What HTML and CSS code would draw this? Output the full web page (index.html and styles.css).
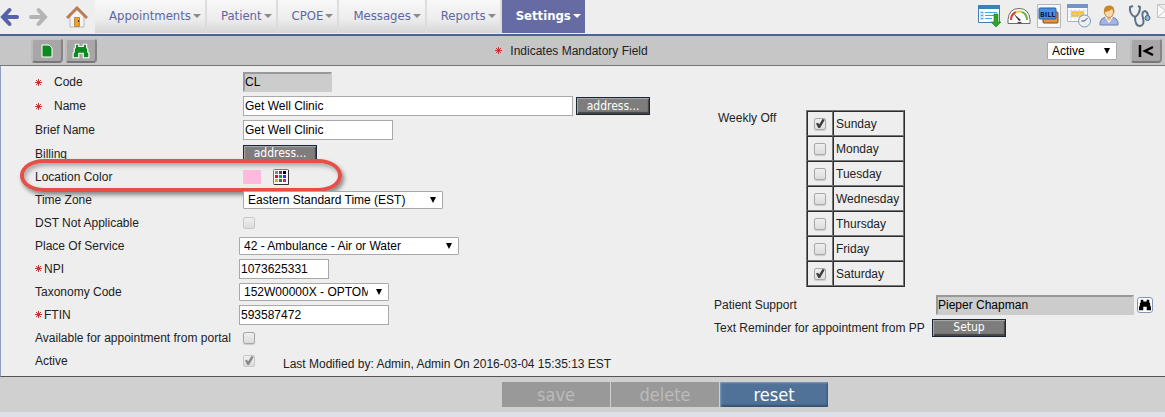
FILE: index.html
```html
<!DOCTYPE html>
<html lang="en">
<head>
    <meta charset="UTF-8">
    <title>Location Settings</title>
    <link rel="stylesheet" href="styles.css">
</head>
<body>

<svg class="defs" aria-hidden="true">
    <symbol id="star" viewBox="0 0 7 7">
        <path d="M0 3.5h7M3.5 0v7M1 1l5 5M6 1L1 6" stroke="#c0392f" stroke-width="1" fill="none"/>
    </symbol>
    <symbol id="binoculars" viewBox="0 0 16 14">
        <path d="M3 1h3v2h4V1h3v3l1 1v3l1 1v4h-5V9H6v4H1V9l1-1V5l1-1z"/>
    </symbol>
</svg>

<header class="topbar">
    <div class="history">
        <button class="plain" aria-label="Back">
            <svg width="19" height="20" viewBox="0 0 19 20"><path d="M17 10H4M9.500 3L3 10l6.500 7" fill="none" stroke="#5563a8" stroke-width="4" stroke-linecap="round"/></svg>
        </button>
        <button class="plain" aria-label="Forward">
            <svg width="19" height="20" viewBox="0 0 19 20"><path d="M2 10h13M9.500 3L16 10l-6.500 7" fill="none" stroke="#b4b4b4" stroke-width="4" stroke-linecap="round"/></svg>
        </button>
        <a href="#" class="home" aria-label="Home">
            <svg width="22" height="22" viewBox="0 0 22 22">
                <path d="M4 10l7-7 7 7v11H4z" fill="#f4f4f6" stroke="#b5b7bd"/>
                <path d="M8.500 11.500h5v9h-5z" fill="#f0a21c" stroke="#b98a4a"/>
                <path d="M12 14h1v2h-1z" fill="#333"/>
                <path d="M1 12L11 2l10 10" fill="none" stroke="#b97c55" stroke-width="3"/>
            </svg>
        </a>
    </div>
    <nav class="tabs">
        <a href="#" class="tab">Appointments<span class="caret"></span></a>
        <a href="#" class="tab">Patient<span class="caret"></span></a>
        <a href="#" class="tab">CPOE<span class="caret"></span></a>
        <a href="#" class="tab">Messages<span class="caret"></span></a>
        <a href="#" class="tab">Reports<span class="caret"></span></a>
        <a href="#" class="tab active">Settings<span class="caret"></span></a>
    </nav>
    <div class="shortcuts">
        <a href="#" aria-label="Task list">
            <svg width="24" height="24" viewBox="0 0 24 24">
                <path d="M1.500 1.500h21v17h-21z" fill="#fff" stroke="#477aa8"/>
                <path d="M1 1h22v4H1z" fill="#3f7fb5"/>
                <path d="M3 7h4v9H3z" fill="#cfe6f5"/>
                <path d="M4 8.500h2M4 11.500h2M4 14.500h2M8 8.500h12M8 11.500h9M8 14.500h7" stroke="#4aa3d8" fill="none"/>
                <path d="M17 10h4v8h3l-5 5-5-5h3z" fill="#2ba52b" stroke="#168016" stroke-width=".6"/>
            </svg>
        </a>
        <a href="#" aria-label="Dashboard">
            <svg width="24" height="24" viewBox="0 0 24 24">
                <path d="M1 19.500v-4q1-11 11-11t11 11v4z" fill="#fff" stroke="#6b6b6b"/>
                <path d="M4 16q0-6 5-8" fill="none" stroke="#d5432f" stroke-width="2"/>
                <path d="M9 8q3-1 6 0" fill="none" stroke="#e3ce3e" stroke-width="2"/>
                <path d="M15 8q5 2 5 8" fill="none" stroke="#67b34b" stroke-width="2"/>
                <path d="M6 9l6 8 2-1z" fill="#333"/>
                <path d="M10 19a3 3 0 0 1 5 0z" fill="#444"/>
            </svg>
        </a>
        <a href="#" aria-label="Billing">
            <svg width="24" height="24" viewBox="0 0 24 24">
                <path d="M.5.500h23v23H.5z" fill="#f8f8f8" stroke="#b4b4bc"/>
                <rect x="6" y="8" width="15" height="11" rx="1" fill="#e8943a" stroke="#7a4a1e"/>
                <rect x="2" y="4" width="17" height="11" rx="1" fill="#4a90e2" stroke="#2a5ca8"/>
                <text x="3" y="13" class="bill">BILL</text>
            </svg>
        </a>
        <a href="#" aria-label="Calendar">
            <svg width="24" height="24" viewBox="0 0 24 24">
                <path d="M.5.500h20v17H.5z" fill="#fff" stroke="#a9b6ca"/>
                <path d="M0 0h21v4H0z" fill="#6f95cc"/>
                <path d="M4 7h13v6H4z" fill="#fbbd2c"/>
                <path d="M1 7h19M1 10h19M1 13h19M4 5v12M8 5v12M12.500 5v12M17 5v12" stroke="#ccd6e6" fill="none" stroke-width=".7"/>
                <circle cx="17.500" cy="17" r="6" fill="#e9f0f6" stroke="#8595a8"/>
                <path d="M17.500 17l3-3M17.500 17h-3" stroke="#444" fill="none"/>
            </svg>
        </a>
        <a href="#" aria-label="User">
            <svg width="24" height="24" viewBox="0 0 24 24">
                <path d="M3 21v-3q1-4 6-5h6q5 1 6 5v3z" fill="#a3b4e0" stroke="#6f80b3"/>
                <path d="M8 13l4 6 4-6z" fill="#fff"/>
                <path d="M10 12h4v3l-2 2-2-2z" fill="#eab878"/>
                <ellipse cx="12" cy="8" rx="4.500" ry="5.500" fill="#f9d9a8" stroke="#c08a3e"/>
                <path d="M7 9Q6 1.500 12 1.500q6-.5 5.500 8Q17 7 15 5q-3 3-7 3z" fill="#c9862b"/>
            </svg>
        </a>
        <a href="#" aria-label="Clinical">
            <svg width="24" height="24" viewBox="0 0 24 24" fill="none">
                <path d="M6 2L3 3q-1 7 5 10 5-3 5-10l-2-1" stroke="#5d7184" stroke-width="2"/>
                <path d="M8 13q0 9 5 9 5-1 3-8-2-6 2-7 3 1 3 6" stroke="#5d7184" stroke-width="2"/>
                <circle cx="20.500" cy="14" r="2.500" fill="#8fb6dd" stroke="#45617c"/>
            </svg>
        </a>
        <a href="#" aria-label="Mail">
            <svg width="24" height="24" viewBox="0 0 24 24"><path d="M.5.500h23v13H.5zM1 1l11 8 11-8M1 13l8-7" fill="#fafafa" stroke="#c4c4c4"/></svg>
        </a>
    </div>
</header>

<div class="toolbar">
    <div class="tools">
        <button class="tool" aria-label="New">
            <svg width="12" height="14" viewBox="0 0 12 14"><path d="M1 1h7l3 3v9H1z" fill="#0b8a1f" stroke="#fff"/></svg>
        </button>
        <button class="tool" aria-label="Search">
            <svg width="18" height="16" viewBox="0 0 16 14" fill="#0b8a1f" stroke="#fff"><use href="#binoculars"/></svg>
        </button>
    </div>
    <div class="mandatory"><svg class="star"><use href="#star"/></svg>Indicates Mandatory Field</div>
    <div class="filter">
        <select class="status" aria-label="Status">
            <option>Active</option>
        </select>
        <button class="tool" aria-label="Collapse">
            <svg width="16" height="12" viewBox="0 0 16 12"><path d="M2 0v12M15 2L7 6l8 4" fill="none" stroke="#000" stroke-width="2.500"/></svg>
        </button>
    </div>
</div>

<main class="panel">
    <form class="details">
        <div class="row tall">
            <label for="code" class="wide"><svg class="star"><use href="#star"/></svg>Code</label>
            <div class="field"><input type="text" id="code" class="readonly" value="CL" readonly></div>
        </div>
        <div class="row tall">
            <label for="name" class="wide"><svg class="star"><use href="#star"/></svg>Name</label>
            <div class="field">
                <input type="text" id="name" value="Get Well Clinic">
                <button type="button" class="btn">address...</button>
            </div>
        </div>
        <div class="row tall">
            <label for="brief">Brief Name</label>
            <div class="field"><input type="text" id="brief" class="medium" value="Get Well Clinic"></div>
        </div>
        <div class="row">
            <label for="billing">Billing</label>
            <div class="field"><button type="button" id="billing" class="btn">address...</button></div>
        </div>
        <div class="row">
            <label for="color">Location Color</label>
            <div class="field">
                <span class="swatch"></span>
                <button type="button" id="color" class="plain" aria-label="Pick color">
                    <svg width="16" height="16" viewBox="0 0 16 16">
                        <rect x=".5" y=".5" width="15" height="15" rx="1" fill="#fff" stroke="#777"/>
                        <path d="M1 15.500h14.500V1" fill="none" stroke="#333"/>
                        <path d="M2 2h3v3H2z" fill="#888"/><path d="M6 2h3v3H6z" fill="#7a2a7a"/><path d="M10 2h3v3h-3z" fill="#000"/>
                        <path d="M2 6h3v3H2z" fill="#d8141c"/><path d="M6 6h3v3H6z" fill="#12984a"/><path d="M10 6h3v3h-3z" fill="#2a32e0"/>
                        <path d="M2 10h3v3H2z" fill="#f5a800"/><path d="M6 10h3v3H6z" fill="#107c7c"/><path d="M10 10h3v3h-3z" fill="#e0148c"/>
                    </svg>
                </button>
            </div>
            <span class="callout"></span>
        </div>
        <div class="row">
            <label for="timezone">Time Zone</label>
            <div class="field">
                <select id="timezone" class="tz"><option>Eastern Standard Time (EST)</option></select>
            </div>
        </div>
        <div class="row">
            <label for="dst">DST Not Applicable</label>
            <div class="field"><input type="checkbox" id="dst" disabled></div>
        </div>
        <div class="row">
            <label for="place">Place Of Service</label>
            <div class="field flush">
                <select id="place" class="place"><option>42 - Ambulance - Air or Water</option></select>
            </div>
        </div>
        <div class="row">
            <label for="npi" class="tight"><svg class="star"><use href="#star"/></svg>NPI</label>
            <div class="field flush"><input type="text" id="npi" class="short" value="1073625331"></div>
        </div>
        <div class="row">
            <label for="taxonomy">Taxonomy Code</label>
            <div class="field flush">
                <select id="taxonomy" class="medium"><option>152W00000X - OPTOMETRIST</option></select>
            </div>
        </div>
        <div class="row">
            <label for="ftin" class="tight"><svg class="star"><use href="#star"/></svg>FTIN</label>
            <div class="field flush"><input type="text" id="ftin" class="medium" value="593587472"></div>
        </div>
        <div class="row">
            <label for="portal">Available for appointment from portal</label>
            <div class="field"><input type="checkbox" id="portal"></div>
        </div>
        <div class="row">
            <label for="active">Active</label>
            <div class="field">
                <input type="checkbox" id="active" checked disabled>
                <span class="modified">Last Modified by: Admin, Admin On 2016-03-04 15:35:13 EST</span>
            </div>
        </div>
    </form>

    <div class="extras">
        <div class="weekly">
            <span class="weekly-label">Weekly Off</span>
            <table class="days">
                <tr><td><input type="checkbox" id="sun" checked></td><td><label for="sun">Sunday</label></td></tr>
                <tr><td><input type="checkbox" id="mon"></td><td><label for="mon">Monday</label></td></tr>
                <tr><td><input type="checkbox" id="tue"></td><td><label for="tue">Tuesday</label></td></tr>
                <tr><td><input type="checkbox" id="wed"></td><td><label for="wed">Wednesday</label></td></tr>
                <tr><td><input type="checkbox" id="thu"></td><td><label for="thu">Thursday</label></td></tr>
                <tr><td><input type="checkbox" id="fri"></td><td><label for="fri">Friday</label></td></tr>
                <tr><td><input type="checkbox" id="sat" checked></td><td><label for="sat">Saturday</label></td></tr>
            </table>
        </div>
        <div class="row">
            <label for="support">Patient Support</label>
            <div class="field support">
                <input type="text" id="support" class="readonly" value="Pieper Chapman" readonly>
                <button type="button" class="find" aria-label="Find provider">
                    <svg width="14" height="12" viewBox="0 0 16 14"><use href="#binoculars"/></svg>
                </button>
            </div>
        </div>
        <div class="row">
            <label for="setup">Text Reminder for appointment from PP</label>
            <div class="field flush"><button type="button" id="setup" class="btn">Setup</button></div>
        </div>
    </div>
</main>

<footer class="actions">
    <button class="action" disabled>save</button>
    <button class="action" disabled>delete</button>
    <button class="action primary">reset</button>
</footer>

</body>
</html>
```
FILE: styles.css
```css
* {
    box-sizing: border-box;
}

body {
    margin: 0;
    background: #dce0e8;
    font-family: "Liberation Sans", Arial, sans-serif;
    font-size: 12px;
    line-height: 16px;
    color: #222;
    overflow-x: hidden;
}

svg {
    display: block;
    flex: none;
}

input, select, button {
    font-family: inherit;
    font-size: 12px;
    color: #000;
    margin: 0;
}

.defs {
    width: 0;
    height: 0;
    position: absolute;
}

.plain {
    padding: 0;
    border: none;
    background: none;
}

.star {
    width: 7px;
    height: 7px;
}

/* top bar */
.topbar {
    display: flex;
    height: 36px;
    background: #eee;
    border-bottom: 2px solid #4a6592;
    overflow: hidden;
}

.history {
    display: flex;
    align-items: center;
    gap: 10px;
    width: 95px;
    flex: none;
}

.home {
    margin-left: 8px;
}

.tabs {
    display: flex;
    gap: 2px;
    height: 33px;
    background: #dcdcdc;
}

.tab {
    display: flex;
    align-items: center;
    gap: 2px;
    padding: 0 4px 2px 14px;
    background: linear-gradient(#f8f8f8, #ececec 60%, #d6d6d6);
    color: #5d66a3;
    font-family: "DejaVu Sans Condensed", Tahoma, sans-serif;
    font-size: 13px;
    text-decoration: none;
}

.tab.active {
    background: #666ca3;
    color: #fff;
    font-weight: bold;
}

.caret {
    border: 4px solid transparent;
    border-top-color: #8a8a8a;
    border-bottom: none;
}

.active .caret {
    border-top-color: #fff;
}

.shortcuts {
    display: flex;
    gap: 6px;
    margin-left: auto;
    margin-right: -16px;
    padding-top: 4px;
}

.bill {
    font-family: "Liberation Sans Narrow", "DejaVu Sans Condensed", sans-serif;
    font-size: 7px;
    font-weight: bold;
    fill: #0c1e4a;
}

/* toolbar */
.toolbar {
    display: grid;
    grid-template-columns: 1fr auto 1fr;
    align-items: center;
    height: 30px;
    background: #c6c6c6;
    border-bottom: 1px solid #777;
}

.tools {
    display: flex;
    gap: 2px;
    padding-left: 31px;
}

.tool {
    display: flex;
    align-items: center;
    justify-content: center;
    width: 32px;
    height: 25px;
    padding: 0;
    border: 2px solid;
    border-color: #c4c2c2 #858383 #777 #bbb;
    border-radius: 4px;
    background: #a8a6a6;
}

.mandatory {
    display: flex;
    align-items: center;
    gap: 8px;
    padding-right: 22px;
}

.filter {
    display: flex;
    align-items: center;
    justify-content: flex-end;
    gap: 13px;
    padding-right: 3px;
}

/* form controls */
input[type="text"] {
    height: 20px;
    padding: 0 1px;
    border: 1px solid #a9a9a9;
    background: #fff;
}

input[type="text"].readonly {
    padding: 0;
    border: 2px solid #ccc;
    border-top-color: #999;
    border-left-color: #999;
    background: #ccc;
}

select {
    appearance: none;
    height: 18px;
    padding: 0 20px 0 4px;
    border: 1px solid #a9a9a9;
    border-radius: 1px;
    background: #fff url("data:image/svg+xml,%3Csvg xmlns='http://www.w3.org/2000/svg' width='6' height='6'%3E%3Cpath d='M0 0h6L3 6z'/%3E%3C/svg%3E") no-repeat right 6px center;
}

input[type="checkbox"] {
    appearance: none;
    display: block;
    width: 12px;
    height: 12px;
    border: 1px solid #a8a8a8;
    border-radius: 2px;
    background: linear-gradient(#efefef, #dcdcdc);
    box-shadow: 0 1px 1px #ccc;
}

input[type="checkbox"]:checked::before {
    content: "";
    display: block;
    height: 10px;
    background: #3c3c3c;
    clip-path: polygon(10% 50%, 30% 42%, 42% 60%, 75% 5%, 98% 12%, 50% 95%, 34% 95%);
}

input[type="checkbox"]:disabled {
    border-color: #c8c8c8;
    box-shadow: none;
}

input[type="checkbox"]:disabled::before {
    background: #888;
}

.btn {
    width: 74px;
    height: 18px;
    padding: 0;
    border: 1px solid #1b2636;
    background: #7d7d7d;
    box-shadow: inset 1px 1px 1px #aaa, inset -1px -2px 1px #444;
    color: #fff;
    font-family: "DejaVu Sans Condensed", Tahoma, sans-serif;
    line-height: 15px;
}

/* settings panel */
.panel {
    display: grid;
    grid-template-columns: 679px 1fr;
    padding: 4px 0 4px 34px;
    background: #eee;
    border-left: 1px solid #8f9fbd;
    border-bottom: 1px solid #555;
}

.row {
    display: flex;
    align-items: center;
    height: 23px;
    position: relative;
}

.row.tall {
    height: 24px;
}

.row > label {
    display: flex;
    align-items: center;
    width: 204px;
    white-space: nowrap;
}

.row > label.wide {
    gap: 12px;
}

.row > label.tight {
    gap: 2px;
}

.field {
    display: flex;
    align-items: center;
    gap: 3px;
    padding-left: 4px;
}

.field.flush {
    padding-left: 0;
}

#code {
    width: 89px;
}

#name {
    width: 330px;
}

.short {
    width: 90px;
}

.medium {
    width: 150px;
}

.tz {
    width: 200px;
}

.place {
    width: 220px;
}

.status {
    width: 70px;
}

.swatch {
    width: 18px;
    height: 14px;
    margin-right: 9px;
    background: #ffb9dc;
}

.callout {
    position: absolute;
    top: -6px;
    left: -15px;
    width: 322px;
    height: 33px;
    border: 4px solid #e64f48;
    border-radius: 24px / 16px;
    box-shadow: 2px 3px 4px #888, inset 2px 3px 4px #aaa;
    pointer-events: none;
}

.modified {
    padding: 6px 0 0 25px;
    white-space: nowrap;
}

/* right column */
.weekly {
    display: flex;
    gap: 30px;
    padding: 40px 0 6px 4px;
}

.weekly-label {
    width: 58px;
    white-space: nowrap;
}

.days {
    border: 1px solid;
    border-color: #777 #2c2c2c #2c2c2c #777;
    border-spacing: 0;
}

.days td {
    height: 25px;
    padding: 0 4px 0 2px;
    border: 1px solid;
    border-color: #2c2c2c #777 #777 #2c2c2c;
}

.days td:first-child {
    padding: 0 6px;
}

.extras .row > label {
    width: 218px;
}

.support {
    flex: 1;
    padding-right: 12px;
}

.support input {
    flex: 1;
    min-width: 0;
}

.find {
    width: 16px;
    height: 16px;
    padding: 0;
    border: 1px solid #8a93b0;
    border-radius: 3px;
    background: #fff;
}

/* bottom buttons */
.actions {
    display: flex;
    justify-content: center;
    gap: 1px;
    padding: 5px 0 5px 165px;
    background: #d0d0d0;
}

.action {
    width: 108px;
    height: 25px;
    padding: 0;
    border: none;
    background: #999;
    color: #bbb;
    font-family: "DejaVu Sans Condensed", Tahoma, sans-serif;
    font-size: 18px;
    line-height: 24px;
}

.action.primary {
    background: #507299;
    box-shadow: inset 1px 1px 2px #7f9fc4, inset -1px -2px 2px #34506f;
    color: #fff;
}
```
